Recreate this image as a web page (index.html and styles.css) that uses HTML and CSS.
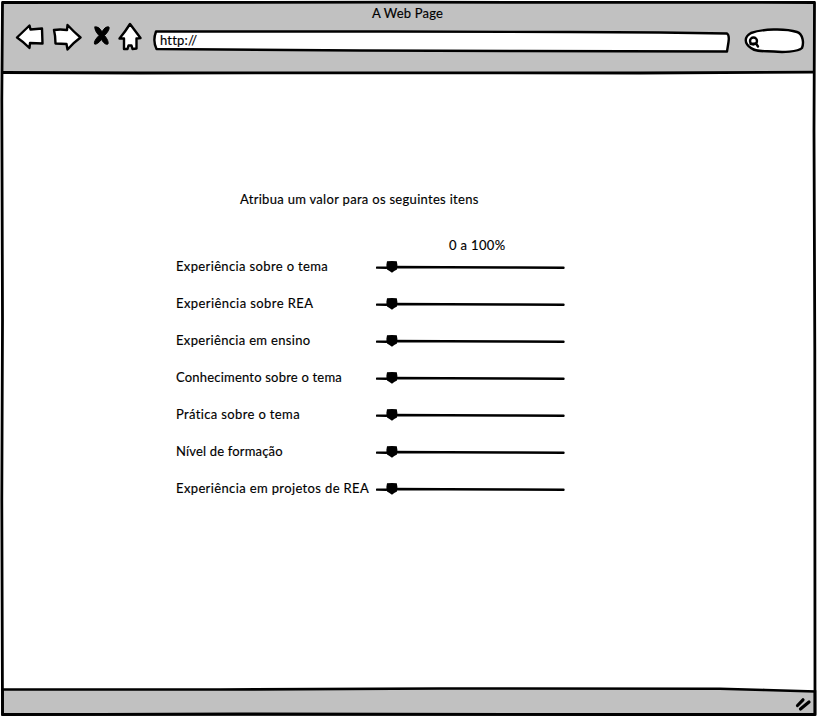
FILE: index.html
```html
<!DOCTYPE html>
<html lang="pt">
<head>
<meta charset="utf-8">
<title>A Web Page</title>
<link rel="stylesheet" href="styles.css">
</head>
<body>
<div class="window">
  <header class="chrome">
    <div class="title"><span class="t-title">A Web Page</span></div>
    <nav class="toolbar">
      <svg class="icon back" width="30" height="30" viewBox="15 22 30 30"><path d="M17 37.500 L29.500 25.500 L30.500 29.500 L42 28.500 L42.500 43.500 L30 43 L29.500 48 Q23 41.500 17 37.500Z"/></svg>
      <svg class="icon forward" width="30" height="30" viewBox="52 22 30 30"><path d="M54 30 Q60 29 67 30 L67.500 25 Q74 32 80.500 37.500 Q73 43 67.500 49.500 L66.500 44 L55.500 43.500 Q55.500 36 54 30Z"/></svg>
      <svg class="icon stop" width="18" height="30" viewBox="93 22 18 30"><path d="M95 27 Q99 26 102 32 Q105 26 109 27 Q110 30 104.500 35.500 Q109 41 108 44 Q105 45.500 101.500 39.500 Q97 45 94.500 44 Q93.500 41 99 35.500 Q94 30 95 27Z"/></svg>
      <svg class="icon home" width="24" height="30" viewBox="118 22 24 30"><path d="M130 24 L140.500 38 L136.500 38.500 L136.500 48.500 L132.500 49 L131.500 45.500 L128.500 45.500 L127.500 49 L124 49 L124 38.500 L119.500 38.500 Q125 32 130 24Z"/></svg>
      <div class="address">
        <svg class="field" width="580" height="26" viewBox="152 28 580 26"><path d="M156 31.500 L390 31.500 L570 32 L660 32.500 L727 33.500 Q729.500 35 728.500 42 L727 51.500 L520 51 L360 50.500 L156.500 49 Q152.500 41 156 31.500Z"/></svg>
        <span class="t-url">http://</span>
      </div>
      <svg class="icon search" width="62" height="28" viewBox="743 27 62 28"><path d="M751 33 C762 29 785 28 797 32 C803 34 804 43 802 48 C798 52 782 52.500 774 51.500 C764 51 756 52 751 48 C744 43 744 37 751 33Z"/><circle cx="753.500" cy="41" r="3.500"/><path d="M750.500 44 L756 43.500 L758 46.500"/></svg>
    </nav>
  </header>
  <main class="page">
    <h1><span class="t-heading">Atribua um valor para os seguintes itens</span></h1>
    <div class="scale"><span class="t-scale">0 a 100%</span></div>
    <ul class="items">
      <li><span class="label tema">Experiência sobre o tema</span><svg class="slider"><use href="#slider"/></svg></li>
      <li><span class="label rea">Experiência sobre REA</span><svg class="slider"><use href="#slider"/></svg></li>
      <li><span class="label ensino">Experiência em ensino</span><svg class="slider"><use href="#slider"/></svg></li>
      <li><span class="label conhecimento">Conhecimento sobre o tema</span><svg class="slider"><use href="#slider"/></svg></li>
      <li><span class="label pratica">Prática sobre o tema</span><svg class="slider"><use href="#slider"/></svg></li>
      <li><span class="label nivel">Nível de formação</span><svg class="slider"><use href="#slider"/></svg></li>
      <li><span class="label projetos">Experiência em projetos de REA</span><svg class="slider"><use href="#slider"/></svg></li>
    </ul>
  </main>
  <footer class="status"></footer>
  <svg class="frame" width="817" height="717" viewBox="0 0 817 717">
    <defs>
      <g id="slider">
        <path d="M1 7.600 L10 7.800 L15 7 L70 7.300 L140 7.500 L187.500 7.800" fill="none" stroke="#000" stroke-width="2.400" stroke-linecap="round"/>
        <path d="M11 1.300 Q16 .5 20.800 1.300 Q22 5 21 9.500 Q18 11 16 12.700 Q13.500 11 11 9.500 Q9.700 5 11 1.300Z"/>
      </g>
    </defs>
    <path class="bar" d="M2.500 689.500 L90 689.500 L220 689.500 L440 688.500 L720 688.700 L765 690 L815 691.500 L815 714.500 L2.500 714.500Z"/>
    <path class="line" d="M2.500 2.500 L400 2.200 L814.500 2.500 L814 130 L814.800 350 L815 714.500 L620 714.500 L240 713.800 L100 714.300 L2.500 714.500 L1.800 500 L2.500 320 L1.800 100Z"/>
    <path class="line" d="M3 72.500 L140 73 L440 72.800 L640 73 L814 72.200"/>
    <path class="mark" d="M797.500 705.500 L803 699.800 M800.500 709 L809 702"/>
  </svg>
</div>
</body>
</html>
```
FILE: styles.css
```css
* { box-sizing: border-box; }
body {
  margin: 0;
  background: #fff;
  color: #000;
  font: 13px/20px Lato, "Open Sans", sans-serif;
  font-variant-ligatures: none;
  -webkit-text-stroke: .15px #000;
}
.window {
  position: relative;
  display: flex;
  flex-direction: column;
  width: 817px;
  height: 717px;
  overflow: hidden;
}
.chrome {
  flex: none;
  height: 71px;
  margin: 2px 2px 0;
  background: #c1c1c1;
}
.title {
  height: 20px;
  padding: 1px 0 0 370px;
  white-space: nowrap;
}
.toolbar {
  display: flex;
  padding-left: 13px;
}
.icon, .field {
  display: block;
  flex: none;
  fill: #fff;
  stroke: #000;
  stroke-width: 2.4;
  stroke-linejoin: round;
  stroke-linecap: round;
}
.forward { margin-left: 7px; }
.stop { margin-left: 11px; fill: #000; stroke-width: 1; }
.home { margin-left: 7px; }
.address {
  position: relative;
  width: 580px;
  height: 26px;
  margin: 6px 0 0 10px;
}
.address span {
  position: absolute;
  left: 8px;
  top: 2px;
}
.search { margin: 5px 0 0 11px; }
.page {
  flex: 1;
  padding: 116px 0 0 176px;
}
h1 {
  margin: 0;
  padding-left: 64px;
  font: inherit;
  height: 46px;
}
.scale {
  height: 21px;
  padding-left: 273px;
}
.items {
  margin: 0;
  padding: 0;
  list-style: none;
}
.items li {
  display: flex;
  height: 37px;
}
.label {
  width: 200px;
  flex: none;
  white-space: nowrap;
}
.t-title { letter-spacing: .17px; }
.t-url { letter-spacing: .2px; }
.t-heading { letter-spacing: .3px; }
.t-scale { letter-spacing: .35px; }
.tema { letter-spacing: .36px; }
.rea { letter-spacing: .42px; }
.ensino { letter-spacing: .33px; }
.conhecimento { letter-spacing: .2px; }
.pratica { letter-spacing: .36px; }
.nivel { letter-spacing: .17px; }
.projetos { letter-spacing: .37px; }
.slider {
  width: 190px;
  height: 16px;
  margin-top: 4px;
}
.status { height: 27px; flex: none; }
.frame {
  position: absolute;
  inset: 0;
  pointer-events: none;
}
.line { fill: none; stroke: #000; stroke-width: 2.8; stroke-linejoin: round; }
.bar { fill: #c1c1c1; stroke: #000; stroke-width: 2.6; }
.mark { fill: none; stroke: #000; stroke-width: 3.2; stroke-linecap: round; }
```
